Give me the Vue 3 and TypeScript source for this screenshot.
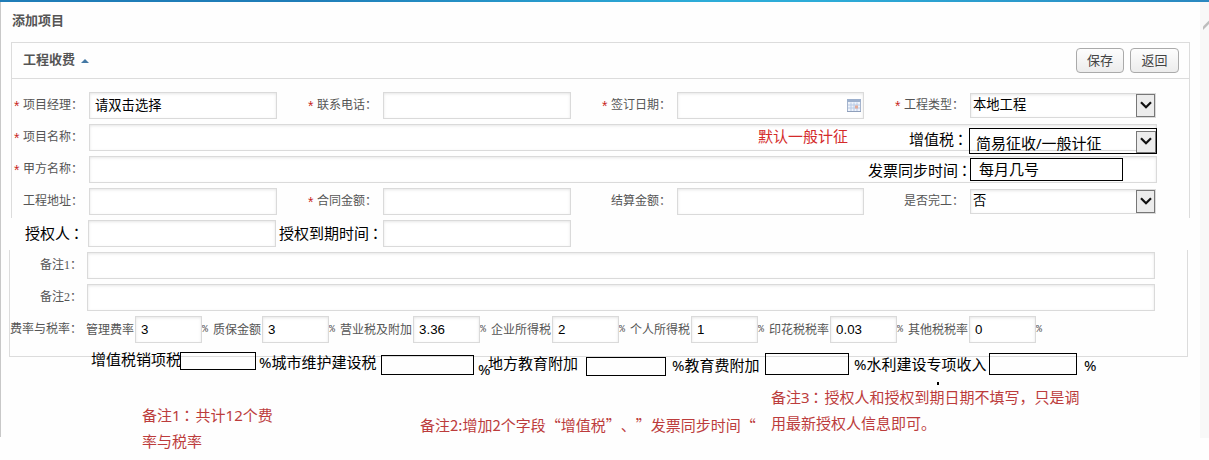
<script setup lang="ts">
interface Field {
  label: string
  required?: boolean
  value?: string
  kind?: 'text' | 'date' | 'select'
}
interface Rate {
  label: string
  value: string
}
interface Note {
  lines: string[]
  x: number
  y: number
  tone?: 'red' | 'bright'
  cjk?: boolean
}
interface Box {
  x: number
  y: number
  w: number
  h: number
}

const peopleRow: Field[] = [
  { label: '项目经理：', required: true, value: '请双击选择' },
  { label: '联系电话：', required: true },
  { label: '签订日期：', required: true, kind: 'date' },
  { label: '工程类型：', required: true, value: '本地工程', kind: 'select' },
]
const wideRows: Field[] = [
  { label: '项目名称：', required: true },
  { label: '甲方名称：', required: true },
]
const amountRow: Field[] = [
  { label: '工程地址：' },
  { label: '合同金额：', required: true },
  { label: '结算金额：' },
  { label: '是否完工：', value: '否', kind: 'select' },
]
const rates: Rate[] = [
  { label: '管理费率', value: '3' },
  { label: '质保金额', value: '3' },
  { label: '营业税及附加', value: '3.36' },
  { label: '企业所得税', value: '2' },
  { label: '个人所得税', value: '1' },
  { label: '印花税税率', value: '0.03' },
  { label: '其他税税率', value: '0' },
]

const boxes: Box[] = [
  { x: 180, y: 352, w: 76, h: 18 },
  { x: 381, y: 355, w: 93, h: 20 },
  { x: 586, y: 357, w: 80, h: 19 },
  { x: 765, y: 353, w: 84, h: 22 },
  { x: 989, y: 353, w: 88, h: 22 },
]

// y is the vertical middle of the first line
const notes: Note[] = [
  { lines: ['默认一般计征'], x: 758, y: 136, tone: 'bright' },
  { lines: ['增值税：'], x: 909, y: 139 },
  { lines: ['发票同步时间：'], x: 868, y: 170 },
  { lines: ['增值税销项税'], x: 91, y: 359 },
  { lines: ['%城市维护建设税'], x: 259, y: 362 },
  { lines: ['%'], x: 478, y: 369 },
  { lines: ['地方教育附加'], x: 488, y: 363 },
  { lines: ['%教育费附加'], x: 672, y: 365 },
  { lines: ['%水利建设专项收入'], x: 854, y: 364 },
  { lines: ['%'], x: 1084, y: 365 },
  { lines: ['备注1：共计12个费', '率与税率'], x: 142, y: 415, tone: 'red' },
  { lines: ['备注2:增加2个字段“增值税”、”发票同步时间“'], x: 420, y: 425, tone: 'red', cjk: true },
  { lines: ['备注3：授权人和授权到期日期不填写，只是调', '用最新授权人信息即可。'], x: 771, y: 397, tone: 'red' },
]

const split = (text: string): string[] => text.split(/(：)/).filter(Boolean)
</script>

<template>
  <div class="page">
    <div class="topbar"></div>
    <div class="gutter">
      <svg width="9" height="14" viewBox="0 0 9 14"><path d="M3 8.500 9 2.500V6L3 12z" fill="#bdbdbd" /></svg>
    </div>
    <div class="edge"></div>
    <h1 class="title">添加项目</h1>

    <section class="panel upper">
      <header class="head">
        <span class="name">工程收费</span>
        <i class="tri"></i>
        <button class="btn">保存</button>
        <button class="btn">返回</button>
      </header>
      <div class="rows">
        <div class="row">
          <div v-for="f in peopleRow" :key="f.label" class="field">
            <label class="label"><b v-if="f.required">*</b>{{ f.label }}</label>
            <div class="input" :class="f.kind">
              <span>{{ f.value }}</span>
              <svg v-if="f.kind === 'date'" class="cal" width="14" height="13" viewBox="0 0 14 13">
                <rect x=".5" y=".5" width="13" height="12" fill="#eef3fb" stroke="#a5b4cd" />
                <path d="M0 0h14v3H0z" fill="#9db0cd" />
                <path d="M1 6h12M1 9h12M4 3.500v9M7 3.500v9M10 3.500v9" stroke="#b9cbe6" />
                <path d="M8 6.500h3v3H8z" fill="#e3ab9a" />
                <path d="M0 12h14v1H0z" fill="#8f9fbb" />
              </svg>
              <span v-if="f.kind === 'select'" class="drop">
                <svg width="12" height="8" viewBox="0 0 12 8"><path d="M1 1.200 6 6.200 11 1.200" fill="none" stroke="#111" stroke-width="2.200" /></svg>
              </span>
            </div>
          </div>
        </div>
        <div v-for="f in wideRows" :key="f.label" class="row">
          <div class="field wide">
            <label class="label"><b>*</b>{{ f.label }}</label>
            <div class="input"></div>
          </div>
        </div>
        <div class="row">
          <div v-for="f in amountRow" :key="f.label" class="field">
            <label class="label"><b v-if="f.required">*</b>{{ f.label }}</label>
            <div class="input" :class="f.kind">
              <span>{{ f.value }}</span>
              <span v-if="f.kind === 'select'" class="drop">
                <svg width="12" height="8" viewBox="0 0 12 8"><path d="M1 1.200 6 6.200 11 1.200" fill="none" stroke="#111" stroke-width="2.200" /></svg>
              </span>
            </div>
          </div>
        </div>
      </div>
    </section>

    <div class="grant">
      <span class="big first">授权人<span class="colon">：</span></span>
      <div class="input"></div>
      <span class="big second">授权到期时间<span class="colon">：</span></span>
      <div class="input"></div>
    </div>

    <section class="panel lower">
      <div v-for="n in 2" :key="n" class="remark">
        <label class="label">备注<span class="num">{{ n }}</span>：</label>
        <div class="input"></div>
      </div>
      <div class="rates">
        <label class="label">费率与税率：</label>
        <div v-for="r in rates" :key="r.label" class="rate">
          <span class="rlabel">{{ r.label }}</span>
          <div class="input">{{ r.value }}</div>
          <span class="pct">%</span>
        </div>
      </div>
    </section>

    <div class="overlay vat">
      <span>简易征收/一般计征</span>
      <span class="drop">
        <svg width="12" height="8" viewBox="0 0 12 8"><path d="M1 1.200 6 6.200 11 1.200" fill="none" stroke="#111" stroke-width="2.200" /></svg>
      </span>
    </div>
    <div class="overlay day">每月几号</div>
    <div
      v-for="b in boxes"
      :key="b.x"
      class="overlay"
      :style="{ left: b.x + 'px', top: b.y + 'px', width: b.w + 'px', height: b.h + 'px' }"
    ></div>
    <i class="dot"></i>
    <div
      v-for="n in notes"
      :key="n.x"
      class="note"
      :class="[n.tone, { cjk: n.cjk }]"
      :style="{ left: n.x + 'px', top: n.y - 13 + 'px' }"
    >
      <div v-for="line in n.lines" :key="line" class="line"><span v-for="(s, i) in split(line)" :key="i" :class="{ colon: s === '：' }">{{ s }}</span></div>
    </div>
  </div>
</template>

<style>
body {
  background: #fff;
}
</style>

<style scoped>
.page {
  position: relative;
  width: 1209px;
  height: 460px;
  overflow: hidden;
  background: #fefefe;
  font-family: "Liberation Sans", "Noto Sans CJK SC", sans-serif;
  font-size: 12px;
  color: #555;
  text-spacing-trim: space-all;
}
.page * {
  box-sizing: border-box;
}
.topbar {
  height: 2px;
  background: linear-gradient(90deg, #1f7db8 0, #1f7db8 25%, #2dacd8 58%, #2dacd8 68%, #2a88c0 100%);
}
.gutter {
  position: absolute;
  left: 1200px;
  top: 2px;
  width: 9px;
  height: 436px;
  padding-top: 16px;
  background: #f8f8f8;
}
.edge {
  position: absolute;
  left: 0;
  top: 2px;
  width: 1px;
  height: 435px;
  background: #c8c8c8;
}
.title {
  margin: 0;
  padding: 8px 0 0 12px;
  height: 40px;
  font-size: 13px;
  line-height: 21px;
  font-weight: 700;
}
.panel {
  border: 1px solid #dcdcdc;
}
.upper {
  margin-left: 11px;
  width: 1179px;
  height: 176px;
  border-bottom: 0;
}
.head {
  display: flex;
  align-items: center;
  height: 36px;
  padding: 0 10px 0 11px;
  border-bottom: 1px solid #dcdcdc;
}
.name {
  font-size: 13px;
  line-height: 20px;
  font-weight: 700;
  margin-top: -2px;
}
.tri {
  margin: 1px auto 0 6px;
  border: 4px solid transparent;
  border-top: 0;
  border-bottom-color: #4478a4;
}
.btn {
  width: 48px;
  height: 25px;
  margin-left: 6px;
  padding: 0 0 2px;
  border: 1px solid #aaa;
  border-radius: 4px;
  background: linear-gradient(#fdfdfd, #ececec);
  font: 13px/20px "Noto Sans CJK SC", sans-serif;
  color: #444;
}
.btn:last-child {
  width: 49px;
}
.rows {
  display: flex;
  flex-direction: column;
  gap: 5px;
  padding-top: 13px;
}
.row {
  display: flex;
  height: 27px;
}
.field {
  display: flex;
  gap: 5px;
  width: 294px;
}
.field:first-child {
  width: 265px;
}
.field:nth-child(3) {
  width: 293px;
}
.field:last-child {
  width: 292px;
}
.field.wide {
  width: 1145px;
}
.label {
  flex: 1;
  padding-right: 1px;
  text-align: right;
  white-space: nowrap;
  line-height: 27px;
}
.label b {
  display: inline-block;
  width: 9px;
  text-align: left;
  font: 14px/14px "Liberation Sans", sans-serif;
  color: #c8281e;
  vertical-align: -2px;
}
.input {
  flex: none;
  position: relative;
  width: 188px;
  height: 27px;
  padding-left: 5px;
  border: 1px solid #dadada;
  background: #fff;
  box-shadow: inset 0 1px 3px rgba(0, 0, 0, 0.1);
  font-size: 13.3px;
  line-height: 25px;
  color: #000;
}
.input.date {
  width: 187px;
}
.field:nth-child(3) .input {
  width: 187px;
}
.wide .input {
  width: 1068px;
}
.cal {
  position: absolute;
  right: 2px;
  top: 6px;
}
.input.select {
  width: 186px;
  height: 25px;
  margin-top: 1px;
  padding-left: 2px;
  line-height: 22px;
}
.drop {
  position: absolute;
  right: 0;
  top: 0;
  display: flex;
  align-items: center;
  justify-content: center;
  width: 19px;
  height: 23px;
  padding-bottom: 2px;
  border: 1px solid #777;
  background: #ececec;
}
.grant {
  display: flex;
  height: 32px;
  padding: 2px 0 0 25px;
}
.big {
  font: 15px/26px "Noto Sans", "Noto Sans CJK SC", sans-serif;
  color: #000;
  white-space: nowrap;
}
.first {
  width: 63px;
}
.second {
  width: 107px;
  padding-left: 3px;
}
.colon {
  position: relative;
  left: -1px;
  font-family: "Noto Sans CJK TC", sans-serif;
}
.lower {
  display: flex;
  flex-direction: column;
  gap: 5px;
  margin-left: 9px;
  width: 1179px;
  height: 107px;
  padding-top: 2px;
  border-top: 0;
}
.remark {
  display: flex;
  gap: 5px;
  width: 1145px;
}
.remark .label {
  padding-right: 0;
}
.remark .input {
  width: 1068px;
}
.num {
  font-family: "Liberation Serif", serif;
}
.rates {
  display: flex;
  gap: 5px;
}
.rates .label {
  flex: none;
  width: 72px;
}
.rate {
  display: flex;
  margin-right: 1px;
}
.rate .input {
  width: 67px;
}
.rlabel {
  position: relative;
  left: -1px;
  line-height: 29px;
}
.pct {
  width: 6px;
  font: 10px/28px "Liberation Mono", monospace;
}
.overlay {
  position: absolute;
  border: 1px solid #000;
  font: 15px/22px "Noto Sans", "Noto Sans CJK SC", sans-serif;
  color: #000;
}
.vat {
  left: 969px;
  top: 128px;
  width: 188px;
  height: 26px;
  padding: 3px 0 0 6px;
}
.vat .drop {
  top: 2px;
  width: 20px;
  height: 22px;
}
.day {
  left: 970px;
  top: 158px;
  width: 153px;
  height: 23px;
  padding-left: 8px;
  background: #fff;
  line-height: 20px;
}
.dot {
  position: absolute;
  left: 937px;
  top: 382px;
  width: 2px;
  height: 3px;
  background: #000;
}
.note {
  position: absolute;
  font: 15px/26px "Noto Sans", "Noto Sans CJK SC", sans-serif;
  color: #000;
}
.line {
  height: 26px;
  white-space: pre;
}
.note.cjk {
  font-family: "Noto Sans CJK SC", sans-serif;
}
.red {
  color: #bc3c3c;
}
.bright {
  color: #d42a2a;
}
</style>
